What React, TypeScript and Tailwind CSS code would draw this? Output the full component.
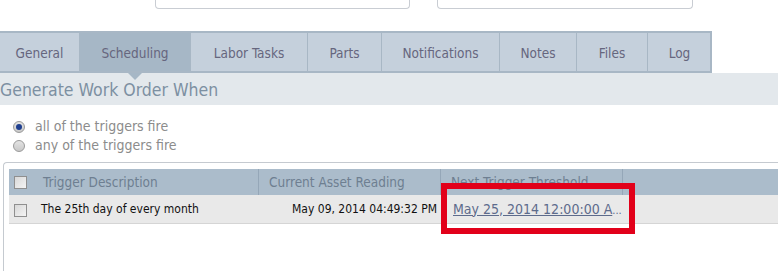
import React from 'react';

const TABS = [
  { label: 'General', w: 80 },
  { label: 'Scheduling', w: 111, active: true },
  { label: 'Labor Tasks', w: 117 },
  { label: 'Parts', w: 74 },
  { label: 'Notifications', w: 118 },
  { label: 'Notes', w: 77 },
  { label: 'Files', w: 71 },
  { label: 'Log', w: 64 },
];

function Radio({ checked }: { checked?: boolean }) {
  return (
    <span className="flex h-[12px] w-[12px] items-center justify-center rounded-full border border-[#9a9a9a] bg-gradient-to-b from-[#e4e4e4] to-[#c8c8c8]">
      {checked && <span className="h-[6px] w-[6px] rounded-full bg-[#1f3f8f]" />}
    </span>
  );
}

function Check() {
  return (
    <span className="block h-[13px] w-[13px] border border-[#8f8f8f] bg-gradient-to-br from-[#d8d8d8] to-[#f4f4f4]" />
  );
}

export default function App() {
  return (
    <div
      className="relative h-[271px] w-[778px] overflow-hidden bg-white"
      style={{ fontFamily: '"DejaVu Sans Condensed", "DejaVu Sans", sans-serif' }}
    >
      {/* cut-off inputs at the top */}
      <div className="flex h-[31px] gap-[27px] pl-[155px]">
        <div className="h-[9px] w-[255px] rounded-b-[4px] border border-t-0 border-[#c9cdd3]" />
        <div className="h-[9px] w-[256px] rounded-b-[4px] border border-t-0 border-[#c9cdd3]" />
      </div>

      {/* tabs */}
      <div className="flex h-[42px] w-[712px] border-t-2 border-b-2 border-r-2 border-[#a8b7c5] bg-[#c5d0dc]">
        {TABS.map((t) => (
          <div
            key={t.label}
            className={`relative flex shrink-0 items-center justify-center border-r border-[#a8b7c5] pt-[3px] text-[13.5px] text-[#66667e] ${
              t.active ? 'bg-[#a6b7c6]' : ''
            }`}
            style={{ width: t.w }}
          >
            {t.label}
            {t.active && (
              <span className="absolute -bottom-[9px] left-1/2 z-10 h-0 w-0 -translate-x-1/2 border-x-[7px] border-t-[7px] border-x-transparent border-t-[#a6b7c6]" />
            )}
          </div>
        ))}
      </div>

      {/* section header */}
      <div className="flex h-[32px] items-center bg-[#e3e8ec] pt-[3px] text-[17.5px] text-[#7d90a2]">
        <span>Generate Work Order When</span>
      </div>

      {/* radios */}
      <div className="flex flex-col gap-[4px] pl-[13px] pt-[14px] text-[14px] text-[#8c8c8c]">
        <label className="flex h-[15px] items-center gap-[10px]">
          <Radio checked />
          all of the triggers fire
        </label>
        <label className="flex h-[15px] items-center gap-[10px]">
          <Radio />
          any of the triggers fire
        </label>
      </div>

      {/* grid */}
      <div className="ml-[3px] mt-[9px] h-[120px] rounded-tl-[4px] border-l border-t border-[#c5cad0] pl-[5px] pt-[6px]">
        <div className="flex h-[26px] items-center bg-[#abbccb] text-[13.5px] text-[#6e7f91]">
          <div className="flex w-[250px] items-center self-stretch border-r border-[#95a7b8] pl-[5px]">
            <Check />
            <span className="ml-[16px]">Trigger Description</span>
          </div>
          <div className="flex w-[182px] items-center self-stretch border-r border-[#95a7b8] pl-[10px]">
            Current Asset Reading
          </div>
          <div className="flex w-[182px] items-center self-stretch border-r border-[#95a7b8] pl-[10px]">
            Next Trigger Threshold
          </div>
          <div className="flex-1" />
        </div>
        <div className="flex h-[29px] items-center border-b border-[#d5d5d5] bg-[#e9e9e9] text-[12px] text-[#111]">
          <div className="flex w-[250px] items-center pl-[5px]">
            <span className="mt-[3px]">
              <Check />
            </span>
            <span className="ml-[14px]">The 25th day of every month</span>
          </div>
          <div className="w-[182px] pr-[4px] text-right">May 09, 2014 04:49:32 PM</div>
          <div className="w-[182px] whitespace-nowrap pl-[12px] text-[14px] text-[#5d6b8c]">
            <span className="underline">May 25, 2014 12:00:00 A</span>
            <span className="text-[11px]">...</span>
          </div>
        </div>
      </div>

      {/* red highlight */}
      <div className="absolute left-[441px] top-[183px] h-[51px] w-[194px] border-[6px] border-[#e2001a]" />
    </div>
  );
}
